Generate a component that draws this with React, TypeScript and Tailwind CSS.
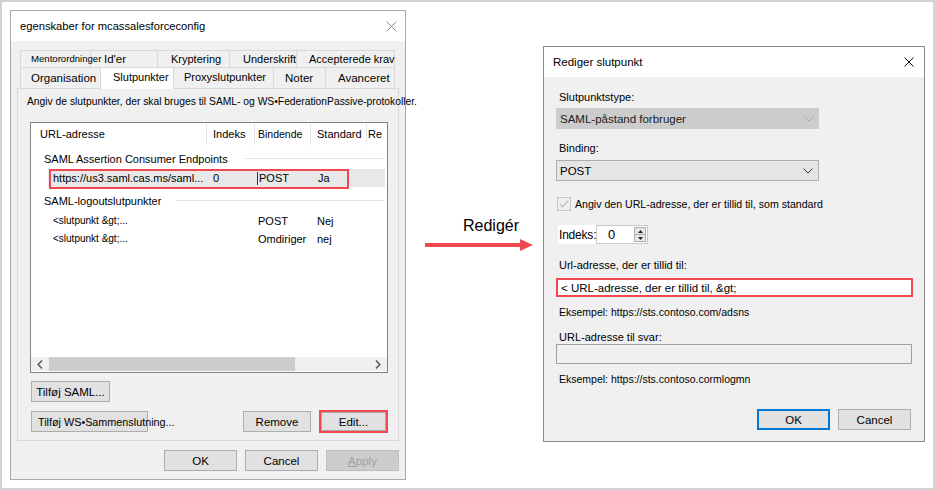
import React from "react";

const RED = "#f0484e";

function XIcon({ color, size }: { color: string; size: number }) {
  return (
    <svg width={size} height={size} viewBox={`0 0 ${size} ${size}`}>
      <path
        d={`M0.5 0.5 L${size - 0.5} ${size - 0.5} M${size - 0.5} 0.5 L0.5 ${size - 0.5}`}
        stroke={color}
        strokeWidth="1"
        fill="none"
      />
    </svg>
  );
}

function Chevron({ color }: { color: string }) {
  return (
    <svg width="10" height="6" viewBox="0 0 10 6">
      <path d="M0.5 0.5 L5 5 L9.5 0.5" stroke={color} strokeWidth="1" fill="none" />
    </svg>
  );
}

function ArrowL() {
  return (
    <svg width="6" height="9" viewBox="0 0 6 9">
      <path d="M5 0.5 L1.2 4.5 L5 8.5" stroke="#606060" strokeWidth="1.6" fill="none" />
    </svg>
  );
}

function ArrowR() {
  return (
    <svg width="6" height="9" viewBox="0 0 6 9">
      <path d="M1 0.5 L4.8 4.5 L1 8.5" stroke="#606060" strokeWidth="1.6" fill="none" />
    </svg>
  );
}

function ListView() {
  return (
    <div className="ml-[12px] mt-[13px] w-[358px] h-[251px] shrink-0 border border-[#828282] bg-white flex flex-col overflow-hidden">
      <div className="h-[22px] flex shrink-0 items-stretch">
        <div className="w-[176px] pl-[9px] flex items-center border-r border-[#e5e5e5]">URL-adresse</div>
        <div className="w-[48px] pl-[6px] flex items-center border-r border-[#e5e5e5]">Indeks</div>
        <div className="w-[56px] pl-[3px] flex items-center border-r border-[#e5e5e5] text-[10.5px]">Bindende</div>
        <div className="w-[56px] pl-[6px] flex items-center border-r border-[#e5e5e5]">Standard</div>
        <div className="pl-[1px] flex items-center">Re</div>
      </div>

      <div className="mt-[7px] flex items-center pl-[13px] pr-[2px] h-[14px]">
        <span className="w-[201px] shrink-0 whitespace-nowrap">SAML Assertion Consumer Endpoints</span>
        <div className="flex-1 h-px bg-[#e2e2e2] -mt-[1px]"></div>
      </div>

      <div className="mt-[3px] ml-[17px] mr-[2px] h-[18px] bg-[#e8e8e8] relative flex items-center">
        <div className="w-[165px] pl-[5px] whitespace-nowrap overflow-hidden">https://us3.saml.cas.ms/saml...</div>
        <div className="w-[44px]">0</div>
        <div className="w-px h-[13px] bg-[#333333]"></div>
        <div className="w-[60px] pl-[1px]">POST</div>
        <div>Ja</div>
        <div className="absolute left-[1px] top-0 w-[300px] h-[20px] border-2 border-[#f0484e]"></div>
      </div>

      <div className="mt-[7px] flex items-center pl-[13px] pr-[2px] h-[14px]">
        <span className="w-[132px] shrink-0 whitespace-nowrap">SAML-logoutslutpunkter</span>
        <div className="flex-1 h-px bg-[#e2e2e2] -mt-[1px]"></div>
      </div>

      <div className="mt-[4px] ml-[17px] h-[18px] flex items-center">
        <div className="w-[210px] pl-[5px] text-[10px] whitespace-nowrap">{"<slutpunkt &gt;..."}</div>
        <div className="w-[59px]">POST</div>
        <div>Nej</div>
      </div>
      <div className="ml-[17px] h-[18px] flex items-center">
        <div className="w-[210px] pl-[5px] text-[10px] whitespace-nowrap">{"<slutpunkt &gt;..."}</div>
        <div className="w-[59px]">Omdiriger</div>
        <div>nej</div>
      </div>

      <div className="flex-1"></div>
      <div className="h-[14px] mb-px flex items-stretch bg-[#f0f0f0] shrink-0">
        <div className="w-[18px] flex items-center justify-center">
          <ArrowL />
        </div>
        <div className="flex-1">
          <div className="w-[246px] h-full bg-[#cdcdcd]"></div>
        </div>
        <div className="w-[18px] flex items-center justify-center">
          <ArrowR />
        </div>
      </div>
    </div>
  );
}

function LeftDialog() {
  return (
    <div className="ml-[8px] mt-[8px] w-[396px] h-[470px] shrink-0 border border-[#a9a9a9] bg-[#f0f0f0] flex flex-col">
      <div className="h-[30px] shrink-0 bg-white flex items-center justify-between pl-[9px] pr-[8px]">
        <span className="text-[11.2px]">egenskaber for mcassalesforceconfig</span>
        <XIcon color="#8a8a8a" size={11} />
      </div>
      <div className="pl-[6px] pt-[9px] flex flex-col">
        <div className="pl-[3px] flex h-[17px]">
          <div className="relative z-10 w-[70px] border-t border-l border-[#d9d9d9] pl-[10px] text-[9.6px] flex items-center whitespace-nowrap">
            Mentorordninger
          </div>
          <div className="w-[67px] border-t border-l border-[#d9d9d9] pl-[13px] text-[11.5px] flex items-center">Id'er</div>
          <div className="w-[72px] border-t border-l border-[#d9d9d9] pl-[13px] flex items-center">Kryptering</div>
          <div className="w-[67px] border-t border-l border-[#d9d9d9] pl-[13px] flex items-center">Underskrift</div>
          <div className="w-[99px] border-t border-l border-r border-[#d9d9d9] pl-[12px] flex items-center whitespace-nowrap">
            Accepterede krav
          </div>
        </div>
        <div className="pl-[3px] flex h-[21px] items-end">
          <div className="w-[80px] h-[21px] border-t border-l border-[#d9d9d9] pl-[10px] text-[11.5px] flex items-center">
            Organisation
          </div>
          <div className="relative z-10 -mb-px w-[74px] h-[22px] bg-white border-t border-l border-r border-[#d9d9d9] pl-[12px] pb-[3px] flex items-center">
            Slutpunkter
          </div>
          <div className="w-[99px] h-[21px] border-t border-[#d9d9d9] pl-[10px] pb-[3px] flex items-center whitespace-nowrap">
            Proxyslutpunkter
          </div>
          <div className="w-[52px] h-[21px] border-t border-l border-[#d9d9d9] pl-[11px] text-[11.5px] flex items-center">Noter</div>
          <div className="w-[70px] h-[21px] border-t border-l border-r border-[#d9d9d9] pl-[12px] text-[11.5px] flex items-center">
            Avanceret
          </div>
        </div>
        <div className="w-[382px] h-[353px] border border-[#d9d9d9] bg-[#f0f0f0] flex flex-col">
          <div className="pl-[9px] pt-[6px] whitespace-nowrap text-[10.3px]">
            Angiv de slutpunkter, der skal bruges til SAML- og WS•FederationPassive-protokoller.
          </div>
          <ListView />
          <div className="ml-[13px] mt-[8px] w-[79px] h-[21px] border border-[#adadad] bg-[#e1e1e1] flex items-center justify-center text-[11.5px] whitespace-nowrap">
            Tilføj SAML...
          </div>
          <div className="ml-[13px] mt-[8px] flex items-center">
            <div className="w-[117px] h-[21px] border border-[#adadad] bg-[#e1e1e1] flex items-center pl-[6px] text-[10.8px] whitespace-nowrap">
              Tilføj WS•Sammenslutning...
            </div>
            <div className="ml-[95px] w-[68px] h-[21px] border border-[#adadad] bg-[#e1e1e1] flex items-center justify-center text-[11.5px]">
              Remove
            </div>
            <div className="ml-[8px] w-[69px] h-[23px] border-2 border-[#f0484e] flex">
              <div className="flex-1 border border-[#adadad] bg-[#e1e1e1] flex items-center justify-center text-[11.5px]">
                Edit...
              </div>
            </div>
          </div>
        </div>
      </div>
      <div className="mt-[9px] flex justify-end gap-[8px] pr-[6px]">
        <div className="w-[73px] h-[21px] border border-[#adadad] bg-[#e1e1e1] flex items-center justify-center text-[11.5px]">OK</div>
        <div className="w-[73px] h-[21px] border border-[#adadad] bg-[#e1e1e1] flex items-center justify-center text-[11.5px]">Cancel</div>
        <div className="w-[73px] h-[21px] border border-[#bfbfbf] bg-[#cccccc] flex items-center justify-center text-[11.5px] text-[#a0a0a0]">
          <span className="underline">A</span>pply
        </div>
      </div>
    </div>
  );
}

function Middle() {
  return (
    <div className="w-[137px] shrink-0 flex flex-col mt-[215px]">
      <div className="pl-[57px] text-[16px] leading-[18px] whitespace-nowrap">Redigér</div>
      <svg className="ml-[19px] mt-[4px]" width="108" height="12" viewBox="0 0 108 12">
        <rect x="0" y="4" width="96" height="4" fill={RED} />
        <polygon points="95,0 108,6 95,12" fill={RED} />
      </svg>
    </div>
  );
}

function RightDialog() {
  return (
    <div className="mt-[44px] w-[382px] h-[396px] shrink-0 border border-[#8a8a8a] bg-[#f0f0f0] flex flex-col">
      <div className="h-[30px] shrink-0 bg-white flex items-center justify-between pl-[9px] pr-[10px]">
        <span className="text-[11.5px]">Rediger slutpunkt</span>
        <XIcon color="#111111" size={10} />
      </div>
      <div className="flex flex-col pl-[12px] pr-[12px]">
        <div className="mt-[13px] pl-[3px]">Slutpunktstype:</div>
        <div className="mt-[4px] w-[263px] h-[21px] bg-[#cccccc] flex items-center justify-between pl-[4px] pr-[5px] text-[11.5px] text-[#222222]">
          <span>SAML-påstand forbruger</span>
          <Chevron color="#ababab" />
        </div>
        <div className="mt-[12px] pl-[3px]">Binding:</div>
        <div className="mt-[5px] w-[263px] h-[21px] bg-[#e5e5e5] border border-[#adadad] flex items-center justify-between pl-[3px] pr-[5px] text-[11.5px]">
          <span>POST</span>
          <Chevron color="#333333" />
        </div>
        <div className="mt-[16px] ml-[1px] flex items-center h-[14px]">
          <div className="w-[14px] h-[14px] border border-[#c6c6c6] flex items-center justify-center">
            <svg width="10" height="8" viewBox="0 0 10 8">
              <path d="M0.8 4 L3.6 6.8 L9.2 0.8" stroke="#c0c0c0" strokeWidth="1.3" fill="none" />
            </svg>
          </div>
          <span className="ml-[4px] whitespace-nowrap text-[10.6px]">Angiv den URL-adresse, der er tillid til, som standard</span>
        </div>
        <div className="mt-[14px] ml-[2px] flex h-[19px]">
          <div className="relative z-10 w-[38px] shrink-0 bg-white flex items-center pl-[1px] text-[12px] tracking-[-0.2px] whitespace-nowrap">
            Indeks:
          </div>
          <div className="w-[52px] shrink-0 bg-white border border-[#c9c9c9] flex items-center justify-between">
            <span className="pl-[11px] text-[13px]">0</span>
            <div className="w-[12px] h-[15px] mr-px flex flex-col border border-[#adadad] bg-[#e8e8e8]">
              <div className="flex-1 flex items-center justify-center border-b border-[#adadad]">
                <svg width="5" height="3" viewBox="0 0 5 3">
                  <polygon points="0,3 2.5,0 5,3" fill="#222222" />
                </svg>
              </div>
              <div className="flex-1 flex items-center justify-center">
                <svg width="5" height="3" viewBox="0 0 5 3">
                  <polygon points="0,0 2.5,3 5,0" fill="#222222" />
                </svg>
              </div>
            </div>
          </div>
        </div>
        <div className="mt-[14px] pl-[3px]">Url-adresse, der er tillid til:</div>
        <div className="mt-[6px] w-[357px] h-[19px] border-2 border-[#f0484e] bg-white flex items-center pl-[3px] text-[11.5px] whitespace-nowrap">
          {"< URL-adresse, der er tillid til, &gt;"}
        </div>
        <div className="mt-[8px] pl-[3px] text-[10.5px]">Eksempel: https://sts.contoso.com/adsns</div>
        <div className="mt-[12px] pl-[3px] leading-[13px]">URL-adresse til svar:</div>
        <div className="w-[356px] h-[20px] border border-[#a0a0a0] bg-[#f0f0f0]"></div>
        <div className="mt-[8px] pl-[3px] text-[10.5px]">Eksempel: https://sts.contoso.cormlogmn</div>
        <div className="mt-[23px] flex justify-end gap-[8px] pr-px">
          <div className="w-[73px] h-[21px] border-2 border-[#0078d7] bg-[#e1e1e1] flex items-center justify-center text-[11.5px]">OK</div>
          <div className="w-[73px] h-[21px] border border-[#adadad] bg-[#e1e1e1] flex items-center justify-center text-[11.5px]">Cancel</div>
        </div>
      </div>
    </div>
  );
}

export default function App() {
  return (
    <div className="w-[935px] h-[490px] bg-white border-2 border-[#d3d3d3] flex items-start font-['Liberation_Sans',Arial,sans-serif] text-[11px] leading-[14px] text-black overflow-hidden">
      <LeftDialog />
      <Middle />
      <RightDialog />
    </div>
  );
}
